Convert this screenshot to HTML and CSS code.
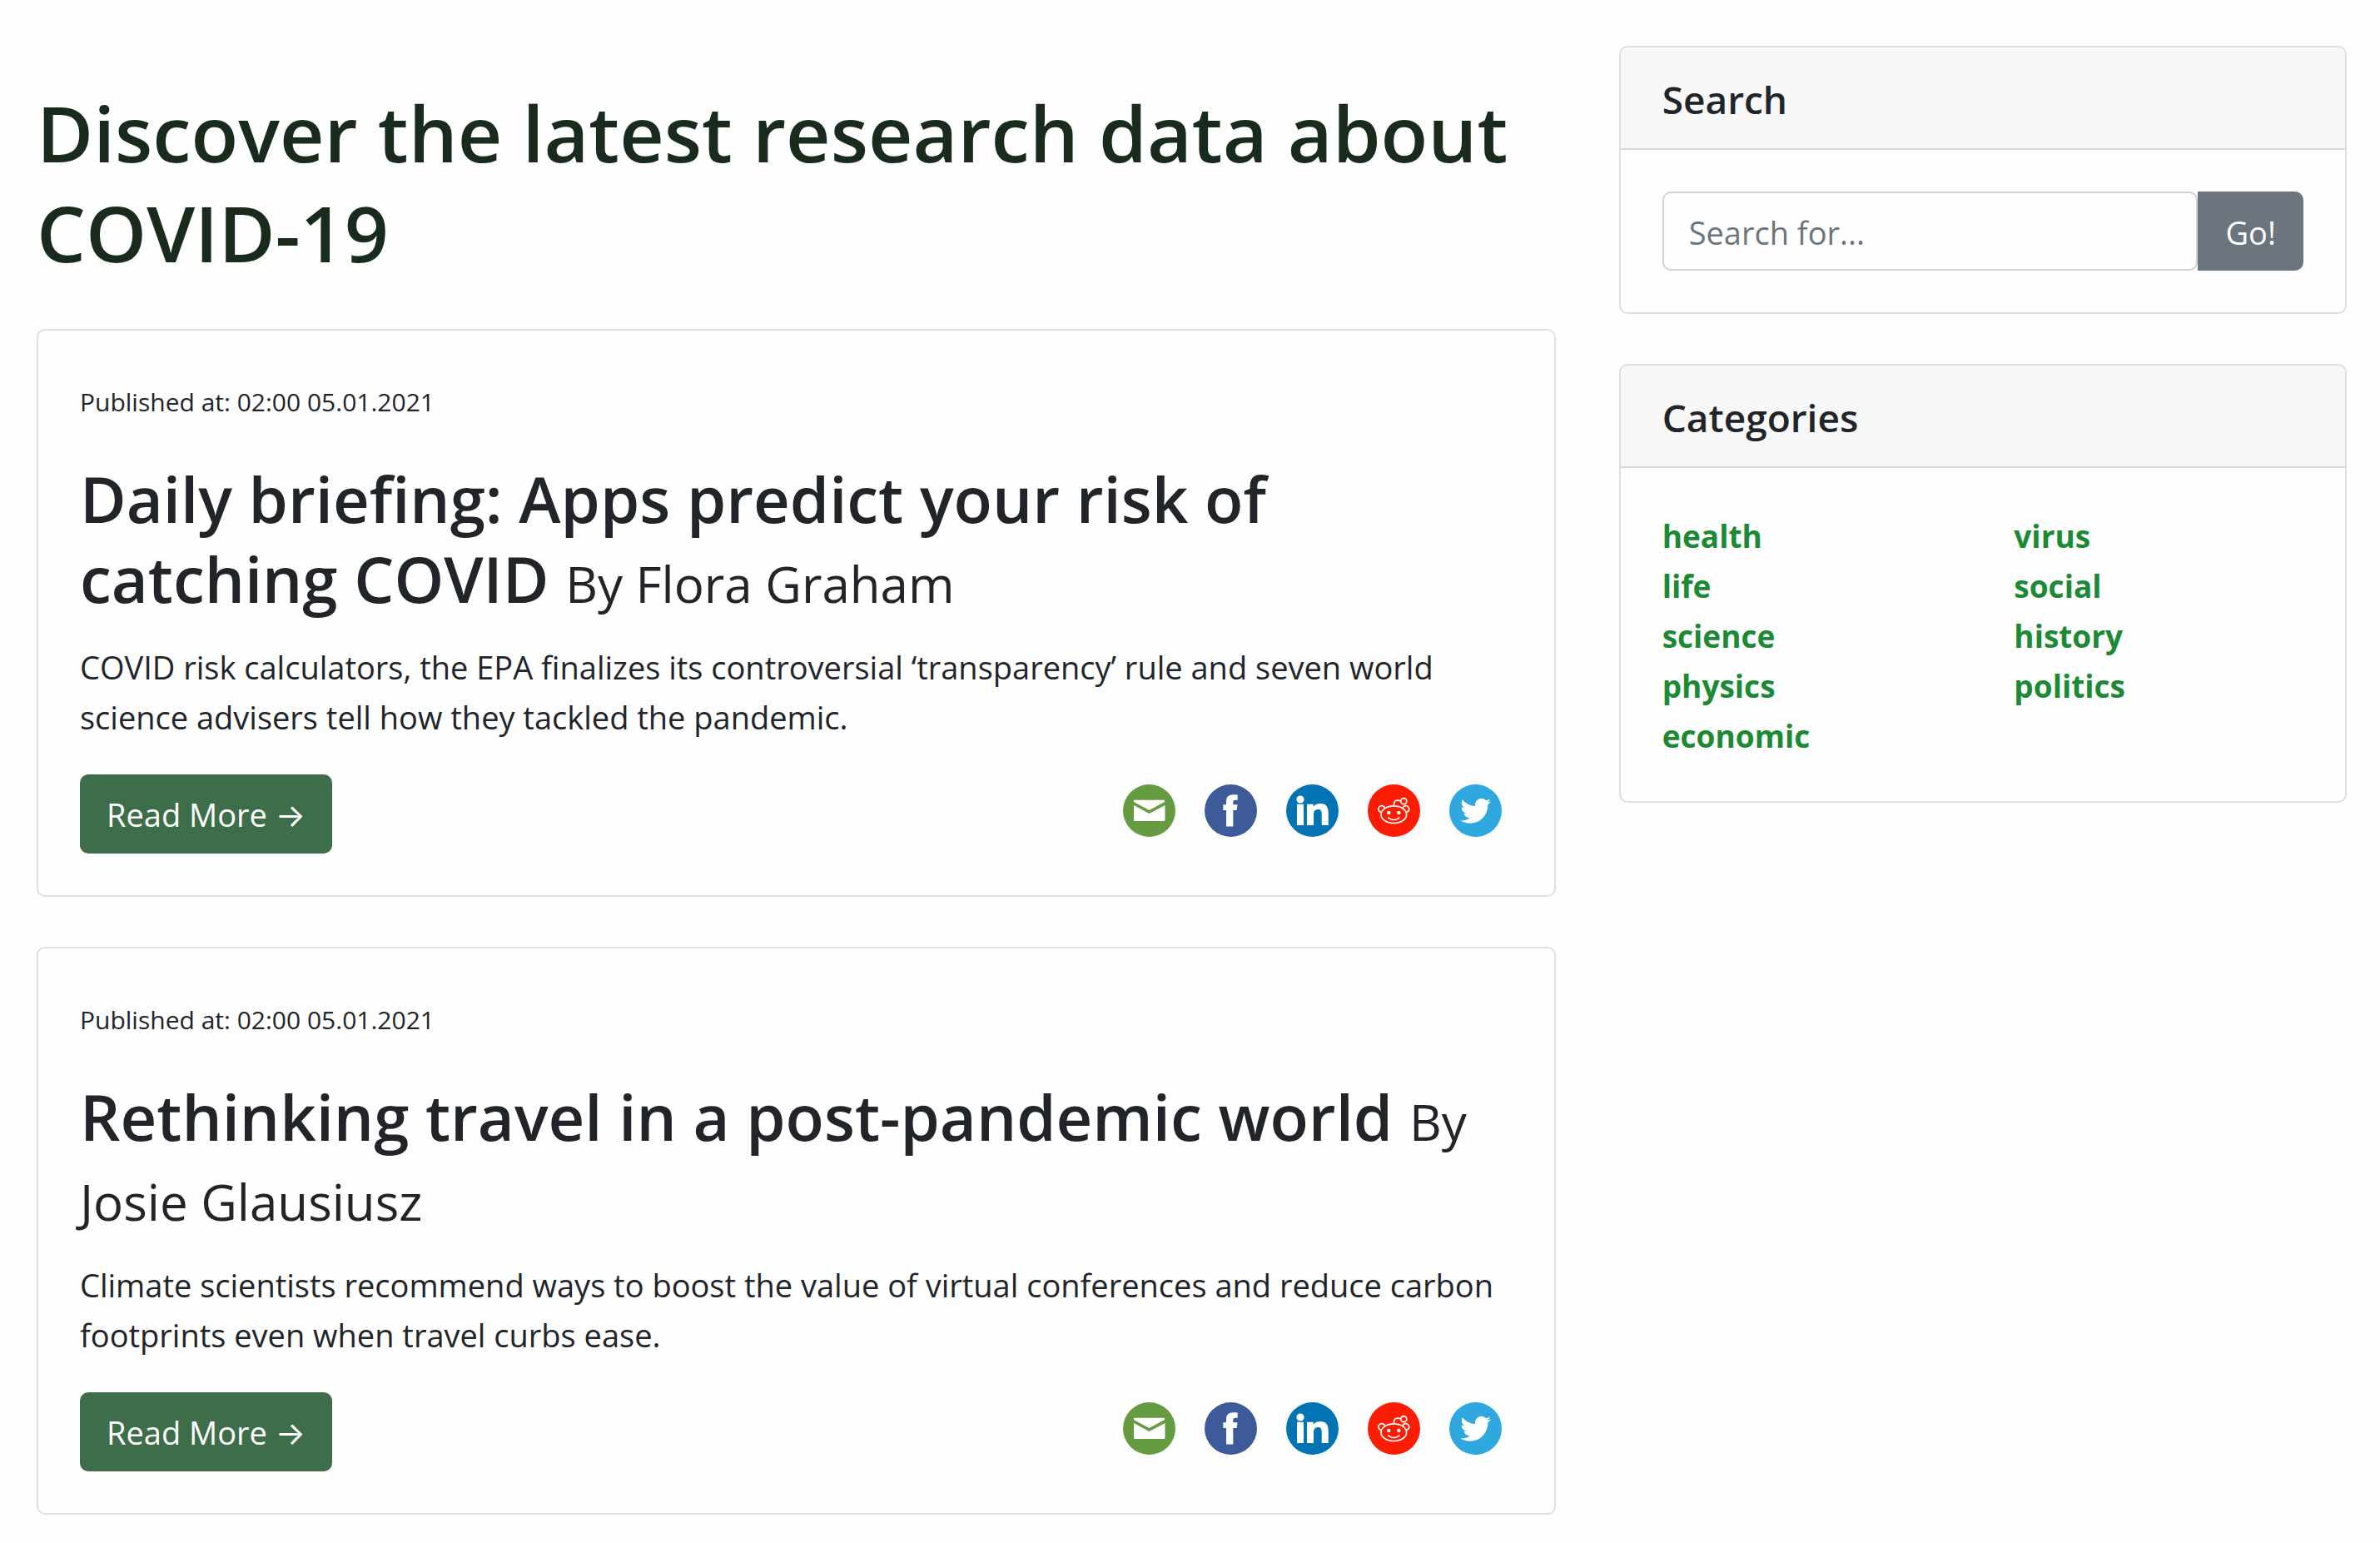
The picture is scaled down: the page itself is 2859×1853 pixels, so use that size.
FILE: index.html
```html
<!DOCTYPE html>
<html lang="en">
<head>
<meta charset="utf-8">
<meta name="viewport" content="width=device-width, initial-scale=1">
<title>COVID-19 research news</title>
<link rel="stylesheet" href="styles.css">
</head>
<body>
<svg class="sprite" aria-hidden="true">
  <symbol id="icon-email" viewBox="0 0 63 63">
    <circle cx="31.5" cy="31.5" r="31.5" fill="#669c41"/>
    <path fill="#fff" d="M13.5 18.8H50V21L31.5 31 13 21v-1.700q0-.5.500-.5zM13 25l18.500 10L50.500 25v17.500q0 1.500-1.500 1.500H14.500Q13 44 13 42.500z"/>
  </symbol>
  <symbol id="icon-facebook" viewBox="0 0 63 63">
    <circle cx="31.500" cy="31.500" r="31.500" fill="#3e5b99"/>
    <path fill="#fff" d="M26 50.500V31h-3.700v-6.700H26v-3.800c0-5.500 3-8.200 8.500-8.200 2 0 4 .1 5.200.3v6.200H37c-2.200 0-2.700 1.200-2.700 2.800v2.700h5.200l-.8 6.700h-4.400v19.500z"/>
  </symbol>
  <symbol id="icon-linkedin" viewBox="0 0 63 63">
    <circle cx="31.500" cy="31.500" r="31.500" fill="#0274b3"/>
    <circle cx="17" cy="18" r="4.600" fill="#fff"/>
    <path fill="#fff" d="M13 23.700h8V49h-8zM25 23.700h7.700V27c1.500-2.500 4.300-4 8.300-4 7.500 0 9.700 4.500 9.700 11.500V49h-8V36c0-3.500-.7-6-4-6-3.700 0-5.700 2-5.700 6v13h-8z"/>
  </symbol>
  <symbol id="icon-reddit" viewBox="0 0 63 63">
    <circle cx="31.500" cy="31.500" r="31.500" fill="#fd1d05"/>
    <g fill="none" stroke="#fff" stroke-width="1.700" stroke-linecap="round">
      <ellipse cx="31.300" cy="36.200" rx="15.300" ry="10.300"/>
      <path d="M16 33.500a4 4 0 1 1 4.600-5.400M46.600 33.500a4 4 0 1 0-4.600-5.400M31.300 25.500c.1-5.500 1.700-7.300 7.900-5.900"/>
      <circle cx="43.300" cy="20.200" r="3.500"/>
      <path d="M24.800 40c3.500 3.300 9.500 3.300 13 0"/>
    </g>
    <circle cx="25.300" cy="34" r="2.200" fill="#fff"/>
    <circle cx="37.300" cy="34" r="2.200" fill="#fff"/>
  </symbol>
  <symbol id="icon-twitter" viewBox="0 0 63 63">
    <circle cx="31.500" cy="31.500" r="31.500" fill="#2ea8df"/>
    <path fill="#fff" transform="translate(13.300 13.400) scale(1.530)" d="M23.953 4.570a10 10 0 01-2.825.775 4.958 4.958 0 002.163-2.723c-.951.555-2.005.959-3.127 1.184a4.920 4.920 0 00-8.384 4.482C7.690 8.095 4.067 6.130 1.640 3.162a4.822 4.822 0 00-.666 2.475c0 1.710.870 3.213 2.188 4.096a4.904 4.904 0 01-2.228-.616v.060a4.923 4.923 0 003.946 4.827 4.996 4.996 0 01-2.212.085 4.936 4.936 0 004.604 3.417 9.867 9.867 0 01-6.102 2.105c-.390 0-.779-.023-1.170-.067a13.995 13.995 0 007.557 2.209c9.053 0 13.998-7.496 13.998-13.985 0-.210 0-.420-.015-.630A9.935 9.935 0 0024 4.590z"/>
  </symbol>
</svg>

<div class="layout">
  <main class="articles">
    <h1 class="page-title">Discover the latest research data about COVID-19</h1>

    <article class="card article">
      <p class="published"><small>Published at: 02:00 05.01.2021</small></p>
      <h2 class="article-title">Daily briefing: Apps predict your risk of catching COVID <small>By Flora Graham</small></h2>
      <p class="summary">COVID risk calculators, the EPA finalizes its controversial ‘transparency’ rule and seven world science advisers tell how they tackled the pandemic.</p>
      <div class="actions">
        <a class="button" href="#">Read More →</a>
        <div class="share">
          <a href="#" aria-label="Email"><svg><use href="#icon-email"/></svg></a>
          <a href="#" aria-label="Facebook"><svg><use href="#icon-facebook"/></svg></a>
          <a href="#" aria-label="LinkedIn"><svg><use href="#icon-linkedin"/></svg></a>
          <a href="#" aria-label="Reddit"><svg><use href="#icon-reddit"/></svg></a>
          <a href="#" aria-label="Twitter"><svg><use href="#icon-twitter"/></svg></a>
        </div>
      </div>
    </article>

    <article class="card article">
      <p class="published"><small>Published at: 02:00 05.01.2021</small></p>
      <h2 class="article-title">Rethinking travel in a post-pandemic world <small>By Josie Glausiusz</small></h2>
      <p class="summary">Climate scientists recommend ways to boost the value of virtual conferences and reduce carbon footprints even when travel curbs ease.</p>
      <div class="actions">
        <a class="button" href="#">Read More →</a>
        <div class="share">
          <a href="#" aria-label="Email"><svg><use href="#icon-email"/></svg></a>
          <a href="#" aria-label="Facebook"><svg><use href="#icon-facebook"/></svg></a>
          <a href="#" aria-label="LinkedIn"><svg><use href="#icon-linkedin"/></svg></a>
          <a href="#" aria-label="Reddit"><svg><use href="#icon-reddit"/></svg></a>
          <a href="#" aria-label="Twitter"><svg><use href="#icon-twitter"/></svg></a>
        </div>
      </div>
    </article>
  </main>

  <aside class="sidebar">
    <section class="card">
      <h5 class="card-header" id="search-title">Search</h5>
      <form class="search">
        <input class="search-input" type="text" placeholder="Search for..." aria-labelledby="search-title">
        <button class="search-button" type="button">Go!</button>
      </form>
    </section>

    <section class="card">
      <h5 class="card-header">Categories</h5>
      <div class="categories">
        <ul>
          <li><a href="#">health</a></li>
          <li><a href="#">life</a></li>
          <li><a href="#">science</a></li>
          <li><a href="#">physics</a></li>
          <li><a href="#">economic</a></li>
        </ul>
        <ul>
          <li><a href="#">virus</a></li>
          <li><a href="#">social</a></li>
          <li><a href="#">history</a></li>
          <li><a href="#">politics</a></li>
        </ul>
      </div>
    </section>
  </aside>
</div>
</body>
</html>
```
FILE: styles.css
```css
*, *::before, *::after {
  box-sizing: border-box;
}

body {
  margin: 0;
  background: #fefefe;
  color: #212529;
  font-family: "Open Sans", Inter, "Noto Sans", sans-serif;
  font-size: 38px;
  line-height: 60px;
}

h1, h2, h5, p, ul {
  margin: 0;
  padding: 0;
}

.sprite {
  display: none;
}

.layout {
  display: grid;
  grid-template-columns: repeat(12, minmax(0, 1fr));
  column-gap: 76px;
  padding: 0 40px 34px 44px;
}

.articles {
  grid-column: span 8;
}

.sidebar {
  grid-column: span 4;
  display: flex;
  flex-direction: column;
  gap: 60px;
  padding-top: 55px;
}

.page-title {
  padding-top: 99px;
  margin-bottom: 56px;
  color: #182b1d;
  font-size: 93px;
  font-weight: 600;
  line-height: 120px;
}

.card {
  border: 2px solid #dfdfdf;
  border-radius: 10px;
  background: #fefefe;
  overflow: hidden;
}

.article {
  padding: 52px 50px 50px;
}

.article + .article {
  margin-top: 60px;
}

.published {
  margin-bottom: 42px;
}

.published small {
  font-size: 30px;
  line-height: 1;
}

.article-title {
  margin-bottom: 28px;
  font-size: 76px;
  font-weight: 600;
  line-height: 96px;
}

.article-title small {
  font-size: 60px;
  font-weight: 400;
  line-height: 1;
}

.summary {
  margin-bottom: 39px;
}

.actions {
  display: flex;
  align-items: flex-start;
  justify-content: space-between;
}

.button {
  padding: 18px 32px 17px;
  border-radius: 10px;
  background: #3d6e49;
  color: #fff;
  text-decoration: none;
}

.share {
  display: flex;
  gap: 35px;
  padding: 12px 13px 0 0;
}

.share svg {
  display: block;
  width: 63px;
  height: 63px;
}

.card-header {
  padding: 32px 50px 29px;
  border-bottom: 2px solid #d9d9d9;
  background: #f7f7f7;
  font-size: 46px;
  font-weight: 600;
}

.search {
  display: flex;
  padding: 50px;
}

.search-input {
  flex: 1;
  min-width: 0;
  height: 95px;
  padding: 3px 30px 0;
  border: 2px solid #ced2d9;
  border-radius: 10px;
  background: #fefefe;
  color: inherit;
  font: inherit;
}

.search-input::placeholder {
  color: #6c757d;
  opacity: 1;
}

.search-button {
  padding: 2px 33px 0;
  border: 0;
  border-radius: 0 10px 10px 0;
  background: #6c757d;
  color: #fff;
  font: inherit;
}

.categories {
  display: grid;
  grid-template-columns: 1fr 1fr;
  column-gap: 75px;
  padding: 52px 50px 48px;
}

.categories ul {
  list-style: none;
  font-size: 37px;
  font-weight: 700;
}

.categories a {
  color: #1c8a35;
  text-decoration: none;
}
```
